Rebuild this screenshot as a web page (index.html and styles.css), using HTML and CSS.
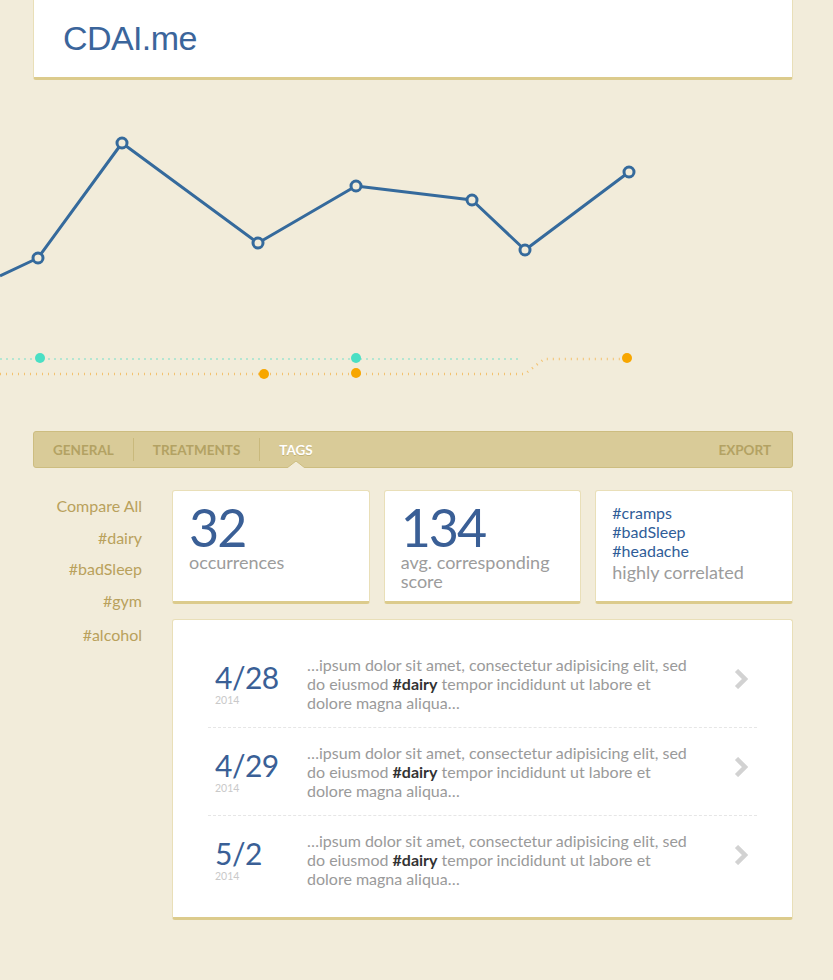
FILE: index.html
```html
<!DOCTYPE html>
<html>
<head>
<meta charset="utf-8">
<link rel="stylesheet" href="styles.css">
</head>
<body>
<div class="page">
  <header class="header">
    <h1 class="logo">CDAI.me</h1>
  </header>

  <svg class="chart" width="833" height="351" viewBox="0 0 833 351">
    <polyline class="line" points="0,196 38,178 122,63 258,163 356,106 472,120 525,170 629,92"/>
    <circle class="pt" cx="38" cy="178" r="5"/>
    <circle class="pt" cx="122" cy="63" r="5"/>
    <circle class="pt" cx="258" cy="163" r="5"/>
    <circle class="pt" cx="356" cy="106" r="5"/>
    <circle class="pt" cx="472" cy="120" r="5"/>
    <circle class="pt" cx="525" cy="170" r="5"/>
    <circle class="pt" cx="629" cy="92" r="5"/>

    <line class="teal-track" x1="0" y1="279" x2="521" y2="279"/>
    <polyline class="orange-track" points="0,294 525,294 544,279 622,279"/>
    <circle class="teal-dot" cx="40" cy="278" r="5"/>
    <circle class="teal-dot" cx="356" cy="278" r="5"/>
    <circle class="orange-dot" cx="264" cy="294" r="5"/>
    <circle class="orange-dot" cx="356" cy="293" r="5"/>
    <circle class="orange-dot" cx="627" cy="278" r="5"/>
  </svg>

  <nav class="tabs">
    <a class="tab">General</a>
    <span class="sep"></span>
    <a class="tab">Treatments</a>
    <span class="sep"></span>
    <a class="tab active">Tags
      <svg class="notch" width="18" height="7" viewBox="0 0 18 7"><polygon points="0,7 9,0 18,7" fill="#F2ECDA"/><polyline points="0,7 9,0 18,7" fill="none" stroke="#CDBD80" stroke-width="1"/></svg>
    </a>
    <a class="tab export">Export</a>
  </nav>

  <div class="main">
    <aside class="side">
      <a class="side-item">Compare All</a>
      <a class="side-item">#dairy</a>
      <a class="side-item">#badSleep</a>
      <a class="side-item">#gym</a>
      <a class="side-item last">#alcohol</a>
    </aside>

    <div class="content">
      <div class="stats">
        <div class="card stat">
          <div class="big">32</div>
          <div class="label">occurrences</div>
        </div>
        <div class="card stat">
          <div class="big">134</div>
          <div class="label">avg. corresponding<br>score</div>
        </div>
        <div class="card stat tags-card">
          <div class="tag">#cramps</div>
          <div class="tag">#badSleep</div>
          <div class="tag">#headache</div>
          <div class="label">highly correlated</div>
        </div>
      </div>

      <div class="card list">
        <div class="row">
          <div class="date"><div class="day">4/28</div><div class="year">2014</div></div>
          <p class="text">…ipsum dolor sit amet, consectetur adipisicing elit, sed do eiusmod <b>#dairy</b> tempor incididunt ut labore et dolore magna aliqua…</p>
          <svg class="chev" width="14" height="20" viewBox="0 0 14 20"><polyline points="2.5,1.5 11,10 2.5,18.5" fill="none" stroke="#D2D2D2" stroke-width="4.5"/></svg>
        </div>
        <div class="row">
          <div class="date"><div class="day">4/29</div><div class="year">2014</div></div>
          <p class="text">…ipsum dolor sit amet, consectetur adipisicing elit, sed do eiusmod <b>#dairy</b> tempor incididunt ut labore et dolore magna aliqua…</p>
          <svg class="chev" width="14" height="20" viewBox="0 0 14 20"><polyline points="2.5,1.5 11,10 2.5,18.5" fill="none" stroke="#D2D2D2" stroke-width="4.5"/></svg>
        </div>
        <div class="row">
          <div class="date"><div class="day">5/2</div><div class="year">2014</div></div>
          <p class="text">…ipsum dolor sit amet, consectetur adipisicing elit, sed do eiusmod <b>#dairy</b> tempor incididunt ut labore et dolore magna aliqua…</p>
          <svg class="chev" width="14" height="20" viewBox="0 0 14 20"><polyline points="2.5,1.5 11,10 2.5,18.5" fill="none" stroke="#D2D2D2" stroke-width="4.5"/></svg>
        </div>
      </div>
    </div>
  </div>
</div>
</body>
</html>
```

FILE: styles.css
```css
html, body {
  margin: 0;
  padding: 0;
  background: #F2ECDA;
}
body {
  font-family: "Lato", "Open Sans", sans-serif;
  color: #9A9A9A;
}
.page {
  width: 833px;
  height: 980px;
  overflow: hidden;
}
.header {
  margin: 0 40px 0 33px;
  height: 77px;
  background: #fff;
  border: 1px solid #E9DFB8;
  border-top: none;
  border-bottom: 3px solid #DCCB8C;
  border-radius: 0 0 3px 3px;
  box-sizing: content-box;
  display: flex;
  align-items: center;
  padding-left: 29px;
}
.logo {
  margin: 0;
  font-family: "Liberation Sans", Arial, sans-serif;
  font-weight: normal;
  font-size: 34px;
  letter-spacing: -0.6px;
  color: #3B659B;
  padding-top: 0;
}
.chart {
  display: block;
}
.line {
  fill: none;
  stroke: #356A9C;
  stroke-width: 3;
  stroke-linejoin: round;
}
.pt {
  fill: #F2ECDA;
  stroke: #356A9C;
  stroke-width: 3;
}
.teal-track {
  stroke: #9FE3CF;
  stroke-width: 1.5;
  stroke-dasharray: 2 4;
}
.orange-track {
  fill: none;
  stroke: #F3C270;
  stroke-width: 2.5;
  stroke-dasharray: 1 5;
}
.teal-dot { fill: #4ADFC4; }
.orange-dot { fill: #F7A600; }

.tabs {
  margin: 0 40px 0 33px;
  height: 35px;
  background: #D9CB98;
  border: 1px solid #CDBD80;
  border-radius: 3px;
  display: flex;
  align-items: center;
  font-weight: bold;
  font-size: 13.5px;
  text-transform: uppercase;
  color: #B3A263;
}
.tab {
  padding: 0 19px 0 19px;
  position: relative;
  height: 35px;
  line-height: 36px;
}
.tab:first-child { padding-left: 19px; }
.tab.active {
  color: #fff;
  text-shadow: 0 1px 0 rgba(150, 130, 60, 0.35);
}
.notch {
  position: absolute;
  left: 50%;
  margin-left: -9px;
  bottom: -1px;
}
.sep {
  width: 1px;
  height: 23px;
  background: #C9B97C;
}
.export {
  margin-left: auto;
  padding-right: 21px;
}

.main {
  display: flex;
  margin: 22px 40px 0 33px;
}
.side {
  width: 109px;
  flex: none;
  display: flex;
  flex-direction: column;
  align-items: flex-end;
  gap: 12.5px;
  padding-top: 6px;
  font-size: 16px;
  line-height: 19px;
  color: #B9A15C;
}
.side .last {
  margin-top: 3px;
}
.content {
  margin-left: 30px;
  flex: 1;
  display: flex;
  flex-direction: column;
  gap: 15px;
}
.stats {
  display: grid;
  grid-template-columns: 1fr 1fr 1fr;
  gap: 14px;
}
.card {
  background: #fff;
  border: 1px solid #E9DFB8;
  border-bottom: 3px solid #DCCB8C;
  border-radius: 3px;
}
.stat {
  height: 114px;
  box-sizing: border-box;
  padding: 10px 16px 0 16px;
}
.big {
  font-size: 52px;
  line-height: 52px;
  color: #3A5F96;
  letter-spacing: -2px;
}
.label {
  font-size: 18px;
  line-height: 19px;
  color: #9C9C9C;
}
.tags-card {
  padding-top: 12px;
}
.tag {
  font-size: 16px;
  line-height: 19px;
  color: #2F5D98;
}
.tags-card .label {
  margin-top: 3px;
}

.list {
  padding: 20px 35px 14px 35px;
}
.row {
  display: flex;
  align-items: center;
  padding: 15px 9px 15px 7px;
  border-bottom: 1px dashed #E6E6E6;
}
.row:last-child { border-bottom: none; }
.date {
  width: 92px;
  flex: none;
}
.day {
  font-size: 30px;
  line-height: 32px;
  letter-spacing: -0.5px;
  color: #3A5F96;
}
.year {
  font-size: 10.5px;
  line-height: 14px;
  color: #C9C9C9;
}
.text {
  margin: 0;
  width: 382px;
  font-size: 16px;
  line-height: 19px;
  color: #9A9A9A;
}
.text b {
  color: #333;
}
.chev {
  margin-left: auto;
  margin-top: -9px;
}
```
